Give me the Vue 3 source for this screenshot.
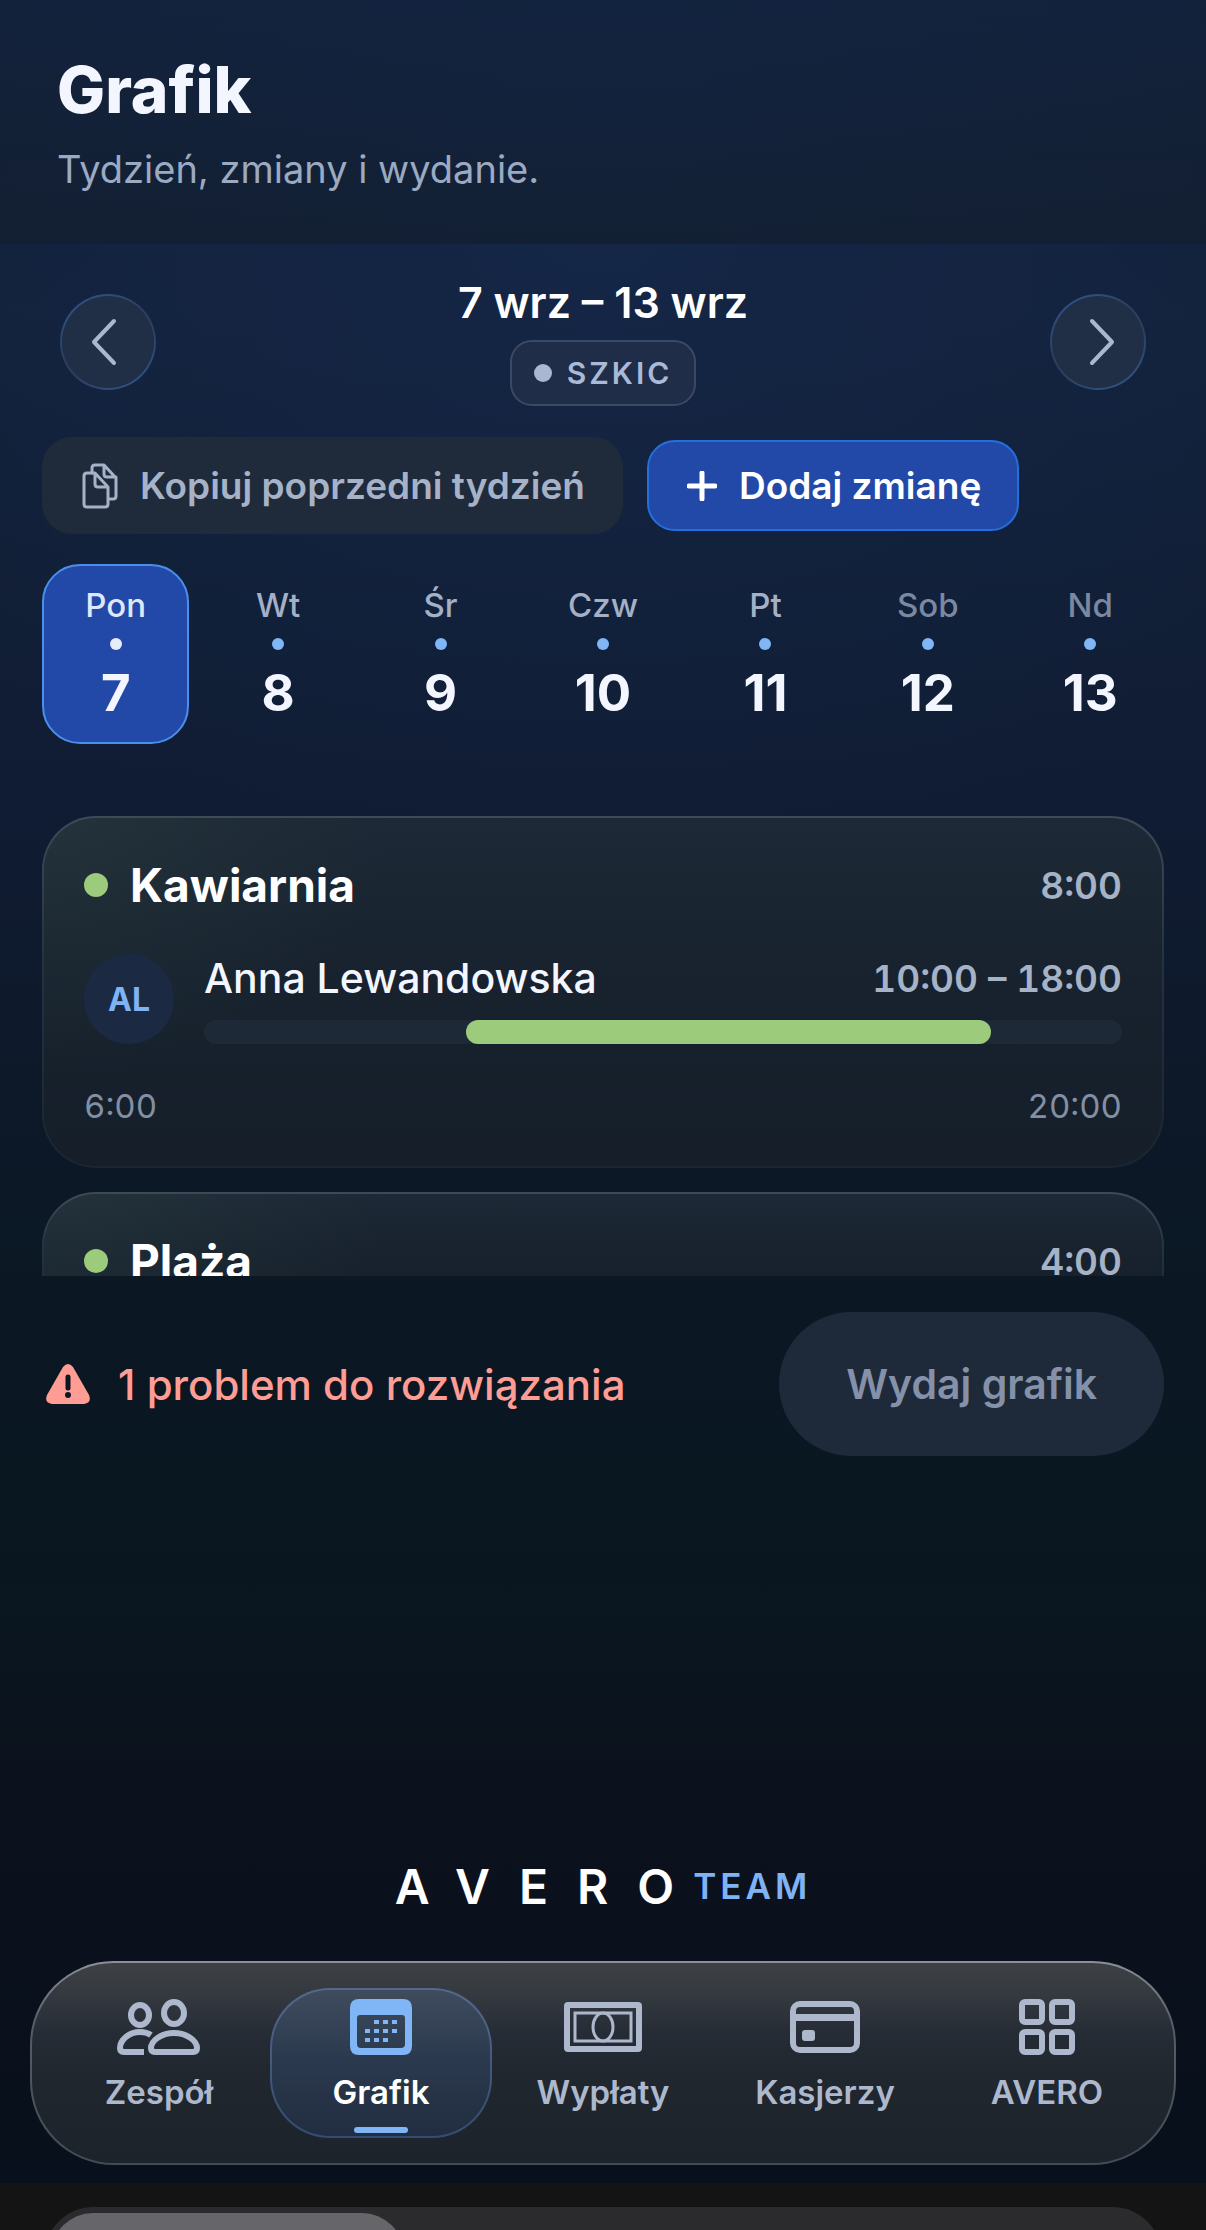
<script setup>
import { ref } from 'vue'

const days = [
  { name: 'Pon', date: 7 },
  { name: 'Wt', date: 8 },
  { name: 'Śr', date: 9 },
  { name: 'Czw', date: 10 },
  { name: 'Pt', date: 11 },
  { name: 'Sob', date: 12, weekend: true },
  { name: 'Nd', date: 13, weekend: true },
]
const selected = ref(7)

const opens = 6
const closes = 20
const venues = [
  {
    name: 'Kawiarnia',
    total: '8:00',
    shifts: [{ initials: 'AL', person: 'Anna Lewandowska', from: 10, to: 18 }],
  },
  { name: 'Plaża', total: '4:00', shifts: [] },
]

const percent = (hours) => (hours / (closes - opens)) * 100 + '%'
</script>

<template>
  <div class="app">
    <header class="top">
      <h1>Grafik</h1>
      <p>Tydzień, zmiany i wydanie.</p>
    </header>

    <main class="content">
      <div class="week">
        <button class="round" type="button" aria-label="Poprzedni tydzień">
          <svg width="48" height="48" viewBox="0 0 48 48"><path d="M30 3 10 24l20 21" /></svg>
        </button>
        <div class="week-info">
          <h2>7 wrz – 13 wrz</h2>
          <span class="status"><i></i>SZKIC</span>
        </div>
        <button class="round" type="button" aria-label="Następny tydzień">
          <svg width="48" height="48" viewBox="0 0 48 48"><path d="M18 3l20 21-20 21" /></svg>
        </button>
      </div>

      <div class="actions">
        <button class="copy" type="button">
          <svg width="36" height="46" viewBox="0 0 36 46">
            <path d="M10 10V5q0-3 3-3h9l12 13v18q0 3-3 3h-4M22 2v9q0 3 3 3h9" />
            <path d="M5 10h8l13 14v17q0 3-3 3H5q-3 0-3-3V13q0-3 3-3zM13 10v11q0 3 3 3h10" />
          </svg>
          Kopiuj poprzedni tydzień
        </button>
        <button class="add" type="button">
          <svg width="30" height="30" viewBox="0 0 30 30"><path d="M15 2v26M2 15h26" /></svg>
          Dodaj zmianę
        </button>
      </div>

      <div class="days">
        <button
          v-for="day in days"
          :key="day.date"
          type="button"
          class="day"
          :class="{ weekend: day.weekend, active: day.date === selected }"
          @click="selected = day.date"
        >
          <span>{{ day.name }}</span>
          <i></i>
          <strong>{{ day.date }}</strong>
        </button>
      </div>

      <div class="venues">
        <section v-for="venue in venues" :key="venue.name" class="card">
          <div class="card-head">
            <i></i>
            <h3>{{ venue.name }}</h3>
            <span class="hours">{{ venue.total }}</span>
          </div>
          <template v-if="venue.shifts.length">
            <div v-for="shift in venue.shifts" :key="shift.person" class="shift">
              <div class="avatar">{{ shift.initials }}</div>
              <div class="shift-body">
                <div class="shift-line">
                  <span class="person">{{ shift.person }}</span>
                  <span class="hours">{{ shift.from }}:00 – {{ shift.to }}:00</span>
                </div>
                <div class="track">
                  <div
                    class="fill"
                    :style="{ marginLeft: percent(shift.from - opens), width: percent(shift.to - shift.from) }"
                  ></div>
                </div>
              </div>
            </div>
            <div class="scale">
              <span>{{ opens }}:00</span>
              <span>{{ closes }}:00</span>
            </div>
          </template>
        </section>
      </div>

      <div class="publish">
        <p class="problem">
          <svg width="44" height="40" viewBox="0 0 44 40">
            <path class="shape" d="M17 3q5-6 10 0l16 28q3 8-5 9H6q-8-1-5-9z" />
            <path class="mark" d="M22 13v11" />
            <circle class="dot" cx="22" cy="31" r="3" />
          </svg>
          1 problem do rozwiązania
        </p>
        <button type="button" disabled>Wydaj grafik</button>
      </div>
    </main>

    <div class="brand"><b>AVERO</b><span>TEAM</span></div>

    <nav class="tabs">
      <a href="#zespol">
        <svg width="84" height="56" viewBox="0 0 84 56">
          <g class="line">
            <ellipse cx="57" cy="14" rx="10" ry="11" />
            <ellipse cx="23" cy="16" rx="9" ry="10" />
            <path d="M57 34c-13 0-23 8-23 15q0 4 4 4h38q4 0 4-4c0-7-10-15-23-15z" />
            <path d="M34 36c-3-2-7-3-11-3-11 0-20 8-20 16q0 4 4 4h20" />
          </g>
        </svg>
        <span>Zespół</span>
      </a>
      <a href="#grafik" class="current" aria-current="page">
        <svg width="62" height="56" viewBox="0 0 62 56">
          <path
            fill-rule="evenodd"
            d="M9 0h44q9 0 9 9v38q0 9-9 9H9q-9 0-9-9V9q0-9 9-9zM10 16q-3 0-3 3v26q0 4 4 4h40q4 0 4-4V19q0-3-3-3z"
          />
          <path
            d="M24 21h5v4h-5zM33 21h5v4h-5zM42 21h5v4h-5zM15 30h5v4h-5zM24 30h5v4h-5zM33 30h5v4h-5zM42 30h5v4h-5zM15 39h5v4h-5zM24 39h5v4h-5zM33 39h5v4h-5z"
          />
        </svg>
        <span>Grafik</span>
      </a>
      <a href="#wyplaty">
        <svg width="78" height="50" viewBox="0 0 78 50">
          <g class="line">
            <rect x="3" y="3" width="72" height="44" rx="1" />
            <rect class="thin" x="11" y="11" width="56" height="28" />
            <ellipse class="thin" cx="39" cy="25" rx="10" ry="14" />
          </g>
        </svg>
        <span>Wypłaty</span>
      </a>
      <a href="#kasjerzy">
        <svg width="70" height="52" viewBox="0 0 70 52">
          <rect class="line" x="3" y="3" width="64" height="46" rx="7" />
          <rect x="4" y="13" width="62" height="7" />
          <rect x="12" y="29" width="13" height="11" rx="3" />
        </svg>
        <span>Kasjerzy</span>
      </a>
      <a href="#avero">
        <svg width="56" height="56" viewBox="0 0 56 56">
          <g class="line grid">
            <rect x="3" y="3" width="20" height="20" rx="3" />
            <rect x="33" y="3" width="20" height="20" rx="3" />
            <rect x="3" y="33" width="20" height="20" rx="3" />
            <rect x="33" y="33" width="20" height="20" rx="3" />
          </g>
        </svg>
        <span>AVERO</span>
      </a>
    </nav>

    <div class="dock">
      <div class="dock-track"><div class="dock-thumb"></div></div>
    </div>
  </div>
</template>

<style>
body {
  margin: 0;
  background: #0c1522;
}
</style>

<style scoped>
* {
  box-sizing: border-box;
}
h1,
h2,
h3,
p {
  margin: 0;
}
button {
  border: 0;
  padding: 0;
  font: inherit;
  cursor: pointer;
}
i {
  display: block;
  border-radius: 50%;
}
svg {
  display: block;
  flex: none;
}
.app {
  display: flex;
  flex-direction: column;
  height: 100vh;
  overflow: hidden;
  font-family: Inter, 'Noto Sans', sans-serif;
  color: #f3f6fe;
  background:
    radial-gradient(ellipse 70% 30% at 50% 10%, rgba(24, 46, 92, 0.35), transparent),
    linear-gradient(#12213a 0%, #13223b 14%, #111f36 25%, #101c33 36%, #0d1828 50%, #0b1824 58%, #091721 68%, #0a151f 74%, #0c121d 80%, #0a111c 88%, #08101d 98%);
}

.top {
  padding: 51px 57px;
  background: linear-gradient(rgba(18, 32, 54, 0.2), rgba(18, 30, 46, 0.75));
}
.top h1 {
  font-size: 64px;
  line-height: 78px;
  font-weight: 800;
}
.top p {
  margin-top: 16px;
  font-size: 38px;
  line-height: 48px;
  color: #9ba9c1;
}

.content {
  flex: 1;
  min-height: 0;
  display: flex;
  flex-direction: column;
  padding: 34px 42px 0;
}
.week {
  display: flex;
  align-items: center;
  justify-content: space-between;
  padding: 0 18px;
}
.round {
  display: flex;
  align-items: center;
  justify-content: center;
  width: 96px;
  height: 96px;
  border: 2px solid transparent;
  border-radius: 50%;
  background:
    linear-gradient(#202e46, #202e46) padding-box,
    linear-gradient(150deg, #32588f, #2b405f 40%, #2b405f 60%, #32588f) border-box;
}
.round path {
  fill: none;
  stroke: #a9b7d0;
  stroke-width: 4;
  stroke-linecap: round;
  stroke-linejoin: round;
}
.week-info {
  display: flex;
  flex-direction: column;
  align-items: center;
  gap: 14px;
}
.week-info h2 {
  font-size: 43px;
  line-height: 48px;
  font-weight: 600;
  color: #fff;
}
.status {
  display: flex;
  align-items: center;
  gap: 15px;
  height: 66px;
  padding: 0 22px;
  border: 2px solid #3a4966;
  border-radius: 22px;
  background: #1f2d48;
  color: #a9b9d8;
  font-size: 30px;
  font-weight: 600;
  letter-spacing: 3px;
}
.status i {
  width: 18px;
  height: 18px;
  background: #a9b7d0;
}

.actions {
  display: flex;
  align-items: center;
  gap: 24px;
  margin-top: 31px;
  font-size: 37px;
  font-weight: 600;
}
.actions button {
  display: flex;
  align-items: center;
  gap: 22px;
  white-space: nowrap;
}
.actions path {
  fill: none;
  stroke: currentColor;
  stroke-width: 3;
  stroke-linejoin: round;
  stroke-linecap: round;
}
.actions .copy {
  height: 97px;
  padding: 0 38px 0 40px;
  border-radius: 30px;
  background: #1f2a3a;
  color: #a6b2c8;
}
.actions .add {
  height: 91px;
  padding: 0 36px 0 38px;
  border: 2px solid #2370dc;
  border-radius: 28px;
  background: #2249a8;
  color: #fff;
}
.actions .add path {
  stroke-width: 5;
}

.days {
  display: grid;
  grid-template-columns: repeat(7, 1fr);
  gap: 15px;
  margin-top: 30px;
}
.day {
  display: flex;
  flex-direction: column;
  align-items: center;
  gap: 13px;
  padding: 19px 0;
  border: 2px solid transparent;
  border-radius: 38px;
  background: transparent;
  color: #a3b0c6;
}
.day span {
  font-size: 33px;
  line-height: 40px;
  font-weight: 500;
}
.day i {
  width: 12px;
  height: 12px;
  background: #80b5f6;
}
.day strong {
  font-size: 51px;
  line-height: 60px;
  font-weight: 700;
  color: #f3f6fe;
}
.day.weekend {
  color: #7a88a1;
}
.day.active {
  border-color: #4a8fec;
  background: #2249a8;
  color: #dfe7fb;
}
.day.active i {
  background: #e8edfa;
}

.venues {
  flex: 1 1 0;
  min-height: 0;
  display: flex;
  flex-direction: column;
  gap: 24px;
  margin-top: 72px;
  overflow: hidden;
}
.card {
  flex: none;
  display: flex;
  flex-direction: column;
  gap: 42px;
  padding: 40px;
  border: 2px solid transparent;
  border-radius: 54px;
  background:
    radial-gradient(ellipse 340px 260px at 0 0, rgba(44, 64, 66, 0.4), transparent) padding-box,
    linear-gradient(#1d2936, #18232f 40%, #151e29 100%) padding-box,
    linear-gradient(#3d4a58, #253240 40%, #1a2531) border-box;
}
.card-head {
  display: flex;
  align-items: center;
  gap: 22px;
  height: 54px;
}
.card-head i {
  width: 24px;
  height: 24px;
  background: #9ccb7b;
}
.card-head h3 {
  flex: 1;
  font-size: 46px;
  line-height: 54px;
  font-weight: 700;
  color: #fff;
}
.hours {
  font-size: 37px;
  font-weight: 600;
  font-variant-numeric: tabular-nums;
  color: #a6b2c6;
}
.shift {
  display: flex;
  gap: 30px;
}
.avatar {
  display: flex;
  align-items: center;
  justify-content: center;
  width: 90px;
  height: 90px;
  border-radius: 50%;
  background: #1b2943;
  color: #7fb3f4;
  font-size: 32px;
  font-weight: 700;
}
.shift-body {
  flex: 1;
  display: flex;
  flex-direction: column;
  gap: 18px;
}
.shift-line {
  display: flex;
  align-items: center;
  justify-content: space-between;
  height: 48px;
}
.person {
  font-size: 41px;
  font-weight: 500;
}
.track {
  height: 24px;
  border-radius: 12px;
  background: #1e2938;
}
.fill {
  height: 24px;
  border-radius: 12px;
  background: #9ccb7b;
}
.scale {
  display: flex;
  justify-content: space-between;
  font-size: 33px;
  line-height: 40px;
  font-variant-numeric: tabular-nums;
  color: #8390a4;
}

.publish {
  display: flex;
  align-items: center;
  justify-content: space-between;
  padding: 36px 0 0 4px;
}
.problem {
  display: flex;
  align-items: center;
  gap: 28px;
  font-size: 42px;
  font-weight: 500;
  color: #ff9d95;
}
.problem .shape {
  fill: #ff9d95;
}
.problem .mark {
  stroke: #0c1724;
  stroke-width: 5;
  stroke-linecap: round;
}
.problem .dot {
  fill: #0c1724;
}
.publish button {
  height: 144px;
  padding: 0 67px;
  border-radius: 72px;
  background: #1e2a3a;
  color: #8491a8;
  font-size: 41px;
  font-weight: 600;
}

.brand {
  display: flex;
  align-items: center;
  justify-content: center;
  height: 48px;
  margin: 406px 0 51px;
}
.brand b {
  margin-right: -10px;
  font-size: 48px;
  font-weight: 600;
  letter-spacing: 29px;
  color: #fff;
}
.brand span {
  font-size: 35px;
  font-weight: 600;
  letter-spacing: 4px;
  color: #7fb3f4;
}

.tabs {
  display: grid;
  grid-template-columns: repeat(5, 1fr);
  margin: 0 30px 18px;
  padding: 25px 16px;
  border: 2px solid transparent;
  border-radius: 84px;
  background:
    linear-gradient(#3d4144, #33383f 18%, #262c35 35%, #20272f 55%, #1d232b) padding-box,
    linear-gradient(#8c9198, #565e68 30%, #424a54) border-box;
}
.tabs a {
  position: relative;
  display: flex;
  flex-direction: column;
  align-items: center;
  height: 150px;
  border: 2px solid transparent;
  border-radius: 60px;
  color: #adb8cd;
  font-size: 33px;
  line-height: 40px;
  font-weight: 600;
  text-decoration: none;
}
.tabs svg {
  margin: auto 0;
  fill: currentColor;
}
.tabs span {
  margin: 8px 0 24px;
}
.tabs .line {
  fill: none;
  stroke: currentColor;
  stroke-width: 6;
}
.tabs .thin {
  stroke-width: 3;
}
.tabs .current {
  color: #fff;
  background:
    linear-gradient(#3f4c5e, #2c3a4f 45%, #212d40) padding-box,
    linear-gradient(#54688a, #344c70) border-box;
}
.current svg {
  color: #80b5f6;
}
.current::after {
  content: '';
  position: absolute;
  bottom: 3px;
  width: 54px;
  height: 6px;
  border-radius: 3px;
  background: #80b5f6;
}

.dock {
  flex: none;
  height: 47px;
  padding: 24px 45px 0;
  overflow: hidden;
  background: #131413;
}
.dock-track {
  height: 96px;
  padding: 6px;
  border-radius: 54px;
  background: #2b2b2d;
}
.dock-thumb {
  width: 32%;
  height: 84px;
  border-radius: 48px;
  background: #66666a;
}
</style>
